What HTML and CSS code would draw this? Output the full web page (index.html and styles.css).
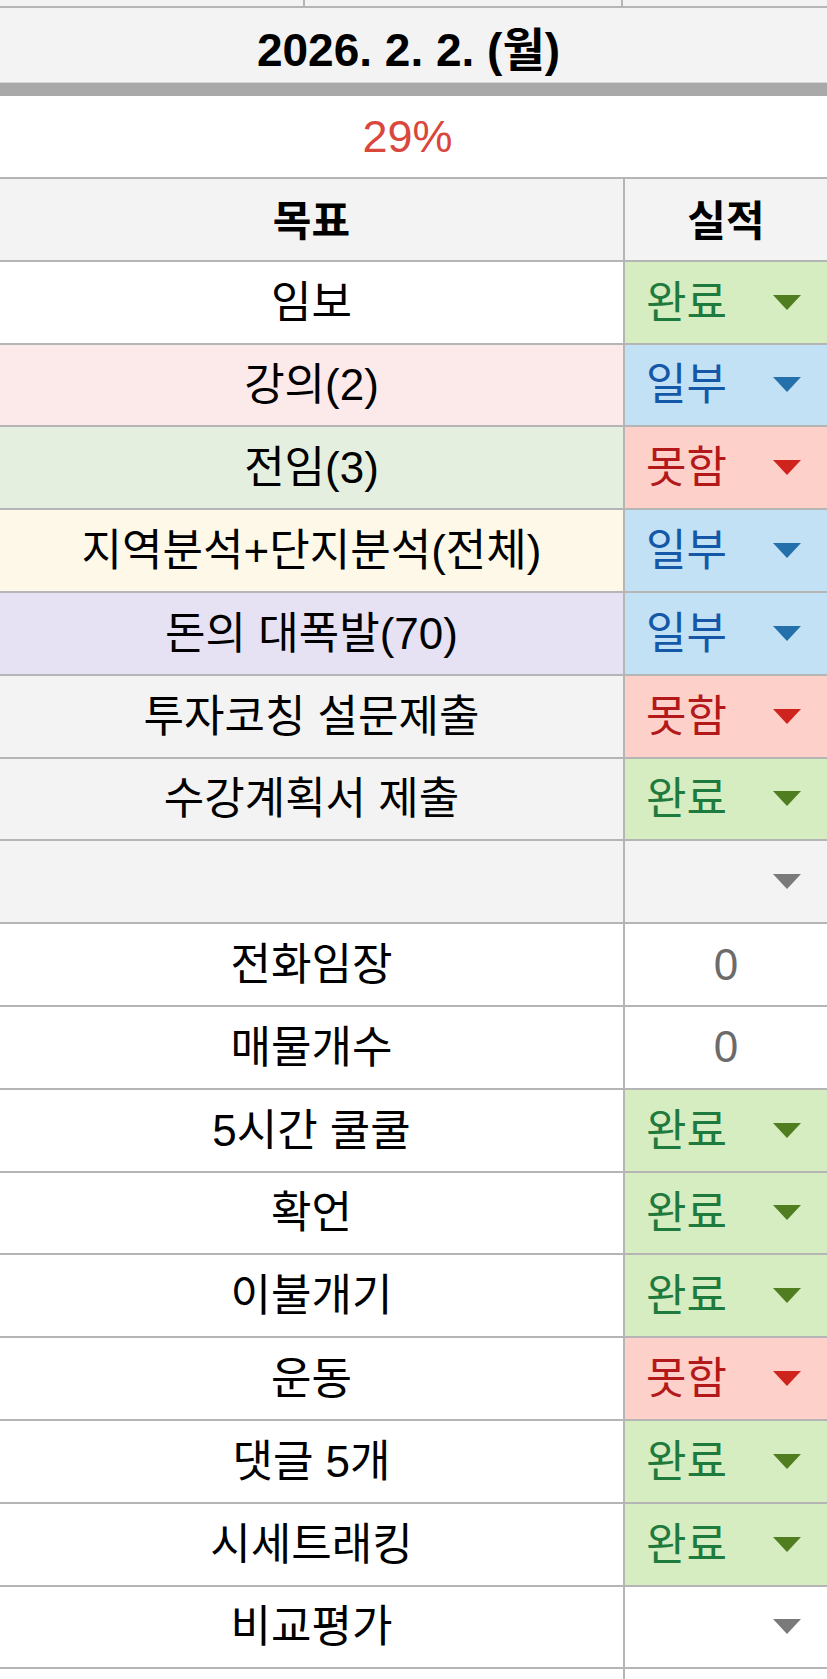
FILE: index.html
```html
<!DOCTYPE html>
<html lang="ko">
<head>
<meta charset="utf-8">
<title>2026. 2. 2. (월)</title>
<link rel="stylesheet" href="styles.css">
</head>
<body>
<div class="sheet">
  <div class="strip"><div class="s1"></div><div class="s2"></div><div class="s3"></div></div>
  <div class="date">2026. 2. 2. (월)</div>
  <div class="pct">29%</div>

  <div class="row head"><div class="goal">목표</div><div class="res">실적</div></div>

  <div class="row"><div class="goal">임보</div><div class="res chip done"><span>완료</span><svg class="arr" viewBox="0 0 28 15"><polygon points="0,0 28,0 14,15"/></svg></div></div>
  <div class="row"><div class="goal pink">강의(2)</div><div class="res chip part"><span>일부</span><svg class="arr" viewBox="0 0 28 15"><polygon points="0,0 28,0 14,15"/></svg></div></div>
  <div class="row"><div class="goal green">전임(3)</div><div class="res chip fail"><span>못함</span><svg class="arr" viewBox="0 0 28 15"><polygon points="0,0 28,0 14,15"/></svg></div></div>
  <div class="row"><div class="goal yellow">지역분석+단지분석(전체)</div><div class="res chip part"><span>일부</span><svg class="arr" viewBox="0 0 28 15"><polygon points="0,0 28,0 14,15"/></svg></div></div>
  <div class="row"><div class="goal purple">돈의 대폭발(70)</div><div class="res chip part"><span>일부</span><svg class="arr" viewBox="0 0 28 15"><polygon points="0,0 28,0 14,15"/></svg></div></div>
  <div class="row"><div class="goal gray">투자코칭 설문제출</div><div class="res chip fail"><span>못함</span><svg class="arr" viewBox="0 0 28 15"><polygon points="0,0 28,0 14,15"/></svg></div></div>
  <div class="row"><div class="goal gray">수강계획서 제출</div><div class="res chip done"><span>완료</span><svg class="arr" viewBox="0 0 28 15"><polygon points="0,0 28,0 14,15"/></svg></div></div>
  <div class="row"><div class="goal gray"></div><div class="res chip empty gray"><svg class="arr" viewBox="0 0 28 15"><polygon points="0,0 28,0 14,15"/></svg></div></div>
  <div class="row"><div class="goal">전화임장</div><div class="res num">0</div></div>
  <div class="row"><div class="goal">매물개수</div><div class="res num">0</div></div>
  <div class="row"><div class="goal">5시간 쿨쿨</div><div class="res chip done"><span>완료</span><svg class="arr" viewBox="0 0 28 15"><polygon points="0,0 28,0 14,15"/></svg></div></div>
  <div class="row"><div class="goal">확언</div><div class="res chip done"><span>완료</span><svg class="arr" viewBox="0 0 28 15"><polygon points="0,0 28,0 14,15"/></svg></div></div>
  <div class="row"><div class="goal">이불개기</div><div class="res chip done"><span>완료</span><svg class="arr" viewBox="0 0 28 15"><polygon points="0,0 28,0 14,15"/></svg></div></div>
  <div class="row"><div class="goal">운동</div><div class="res chip fail"><span>못함</span><svg class="arr" viewBox="0 0 28 15"><polygon points="0,0 28,0 14,15"/></svg></div></div>
  <div class="row"><div class="goal">댓글 5개</div><div class="res chip done"><span>완료</span><svg class="arr" viewBox="0 0 28 15"><polygon points="0,0 28,0 14,15"/></svg></div></div>
  <div class="row"><div class="goal">시세트래킹</div><div class="res chip done"><span>완료</span><svg class="arr" viewBox="0 0 28 15"><polygon points="0,0 28,0 14,15"/></svg></div></div>
  <div class="row"><div class="goal">비교평가</div><div class="res chip empty"><svg class="arr" viewBox="0 0 28 15"><polygon points="0,0 28,0 14,15"/></svg></div></div>
  <div class="row"><div class="goal"></div><div class="res"></div></div>
</div>
</body>
</html>
```

FILE: styles.css
```css
html, body {
  margin: 0;
  padding: 0;
  background: #ffffff;
}

.sheet {
  width: 827px;
  height: 1679px;
  overflow: hidden;
  font-family: "Liberation Sans", "Noto Sans CJK KR", sans-serif;
  font-size: 44px;
  color: #000;
}

.strip {
  display: grid;
  grid-template-columns: 305px 318px 1fr;
  height: 6px;
  background: #f3f3f3;
  border-bottom: 2px solid #b5b5b5;
}
.strip .s1, .strip .s2 {
  border-right: 2px solid #b5b5b5;
}

.date {
  height: 75px;
  display: flex;
  align-items: center;
  justify-content: center;
  background: #f3f3f3;
  font-weight: bold;
  font-size: 46px;
  border-bottom: 13px solid #a9a9a9;
  box-shadow: inset 0 -1px 0 #d6d6d6;
  padding-right: 10px;
}

.pct {
  height: 81px;
  display: flex;
  align-items: center;
  justify-content: center;
  color: #d9473d;
  font-size: 45px;
  border-bottom: 2px solid #b5b5b5;
  padding-right: 12px;
}

.row {
  display: grid;
  grid-template-columns: 625px 1fr;
  height: 80.8px;
  border-bottom: 2px solid #b5b5b5;
}

.goal {
  display: flex;
  align-items: center;
  justify-content: center;
  border-right: 2px solid #b5b5b5;
  background: #ffffff;
  white-space: nowrap;
  padding-bottom: 7px;
}

.res {
  display: flex;
  align-items: center;
  background: #ffffff;
}

.head .goal, .head .res {
  background: #f3f3f3;
  font-weight: bold;
  justify-content: center;
  font-size: 42px;
  padding-bottom: 4px;
}

.pink { background: #fce9e9; }
.green { background: #e5efdf; }
.yellow { background: #fdf8e8; }
.purple { background: #e6e2f4; }
.gray { background: #f3f3f3; }

.chip {
  justify-content: space-between;
  padding: 0 26px 0 21px;
}
.chip span { padding-bottom: 7px; }
.chip.empty { justify-content: flex-end; }

.arr {
  width: 28px;
  height: 15px;
  display: block;
  fill: #7a7a7a;
}

.done { background: #d6ecc1; color: #1f7a3e; }
.done .arr { fill: #4f7d20; }
.part { background: #c3e1f5; color: #1558a8; }
.part .arr { fill: #2470ab; }
.fail { background: #fdd0ca; color: #b3191a; }
.fail .arr { fill: #cf241d; }

.num {
  justify-content: center;
  color: #6b6b6b;
}
```
